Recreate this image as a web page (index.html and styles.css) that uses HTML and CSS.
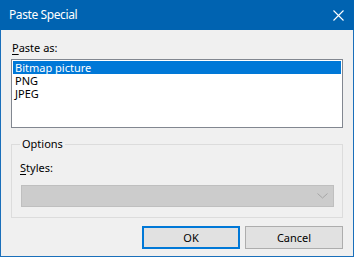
FILE: index.html
```html
<!DOCTYPE html>
<html lang="en">
  <head>
    <meta charset="UTF-8">
    <title>Paste Special</title>
    <link rel="stylesheet" href="styles.css">
  </head>
  <body>
    <div class="window">
      <div class="titlebar">
        <span class="title">Paste Special</span>
        <svg class="close" width="11" height="11" viewBox="0 0 11 11">
          <path d="M0.5 0.5 L10.5 10.5 M10.5 0.5 L0.5 10.5" stroke="#fff" stroke-width="1.1" fill="none"/>
        </svg>
      </div>
      <div class="content">
        <div class="label"><u>P</u>aste as:</div>
        <div class="listbox">
          <div class="item selected">Bitmap picture</div>
          <div class="item">PNG</div>
          <div class="item">JPEG</div>
        </div>

        <fieldset class="group">
          <legend>Options</legend>
          <div class="label"><u>S</u>tyles:</div>
          <div class="combo">
            <svg class="chevron" width="11" height="6" viewBox="0 0 11 6">
              <path d="M0.5 0.5 L5.5 5 L10.5 0.5" stroke="#a6a6a6" stroke-width="1" fill="none"/>
            </svg>
          </div>
        </fieldset>

        <div class="buttons">
          <button class="btn default">OK</button>
          <button class="btn">Cancel</button>
        </div>
      </div>
    </div>
  </body>
</html>
```

FILE: styles.css
```css
body {
  margin: 0;
  font-family: "Noto Sans", "Open Sans", sans-serif;
  font-size: 11px;
  color: #000;
}

.window {
  width: 354px;
  height: 257px;
  display: flex;
  flex-direction: column;
  background-color: #f0f0f0;
}

.titlebar {
  height: 30px;
  flex-shrink: 0;
  display: flex;
  align-items: center;
  justify-content: space-between;
  padding: 0 10px 0 9px;
  background-color: #0063b1;
  color: #fff;
}

.title {
  font-size: 12px;
  letter-spacing: -0.4px;
  padding-bottom: 1px;
}

.close {
  display: block;
}

.content {
  flex: 1;
  border: 1px solid #1a6fba;
  border-top: none;
  padding: 9px 10px 0 10px;
  display: flex;
  flex-direction: column;
}

.label {
  height: 17px;
  line-height: 17px;
  padding-left: 1px;
}

.label u {
  text-decoration-thickness: 1px;
  text-underline-offset: 2px;
}

.listbox {
  margin-top: 3px;
  height: 69px;
  box-sizing: border-box;
  border: 1px solid #828790;
  background-color: #fff;
  padding: 1px;
}

.item {
  height: 13px;
  line-height: 13px;
  padding-left: 2px;
}

.item.selected {
  background-color: #0078d7;
  color: #fff;
}

.group {
  margin: 9px 0 0 0;
  height: 81px;
  box-sizing: border-box;
  border: 1px solid #dcdcdc;
  padding: 8px 8px 0 8px;
}

.group legend {
  padding: 0 2px;
  line-height: 14px;
  color: #000;
}

.group .label {
  padding-left: 0;
}

.combo {
  margin: 9px 0 0 1px;
  width: 313px;
  height: 22px;
  box-sizing: border-box;
  border: 1px solid #bfbfbf;
  background-color: #cccccc;
  display: flex;
  align-items: center;
  justify-content: flex-end;
  padding-right: 5px;
}

.buttons {
  margin-top: 8px;
  display: flex;
  justify-content: flex-end;
  gap: 5px;
}

.btn {
  width: 98px;
  height: 23px;
  box-sizing: border-box;
  border: 1px solid #adadad;
  background-color: #e1e1e1;
  font-family: "Noto Sans", "Open Sans", sans-serif;
  font-size: 11px;
  color: #000;
  padding: 0;
}

.btn.default {
  border: 2px solid #0078d7;
}
```
